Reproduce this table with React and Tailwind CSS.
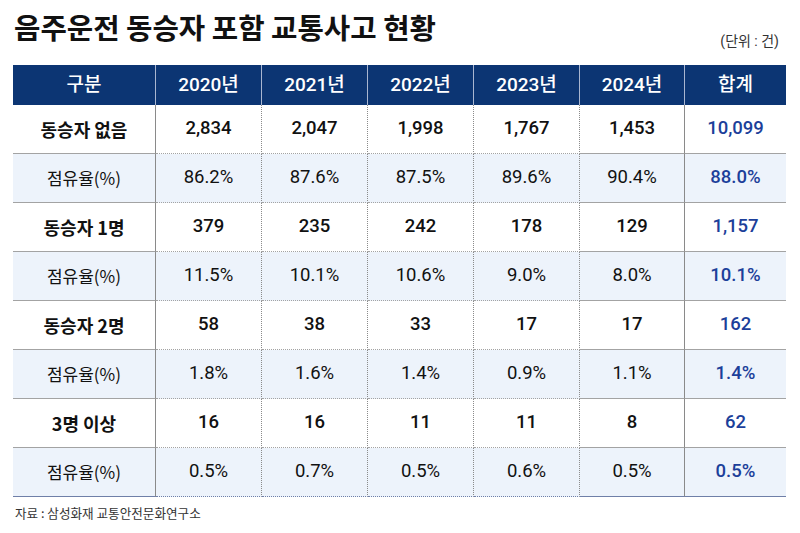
import React from "react";

const rows = [
  { label: "동승자 없음", bold: true, vals: ["2,834", "2,047", "1,998", "1,767", "1,453"], total: "10,099" },
  { label: "점유율(%)", bold: false, vals: ["86.2%", "87.6%", "87.5%", "89.6%", "90.4%"], total: "88.0%" },
  { label: "동승자 1명", bold: true, vals: ["379", "235", "242", "178", "129"], total: "1,157" },
  { label: "점유율(%)", bold: false, vals: ["11.5%", "10.1%", "10.6%", "9.0%", "8.0%"], total: "10.1%" },
  { label: "동승자 2명", bold: true, vals: ["58", "38", "33", "17", "17"], total: "162" },
  { label: "점유율(%)", bold: false, vals: ["1.8%", "1.6%", "1.4%", "0.9%", "1.1%"], total: "1.4%" },
  { label: "3명 이상", bold: true, vals: ["16", "16", "11", "11", "8"], total: "62" },
  { label: "점유율(%)", bold: false, vals: ["0.5%", "0.7%", "0.5%", "0.6%", "0.5%"], total: "0.5%" },
];

const headers = ["구분", "2020년", "2021년", "2022년", "2023년", "2024년", "합계"];

const FONT = { fontFamily: '"Roboto", "Noto Sans CJK KR", sans-serif' };
const KR = { fontFamily: '"Noto Sans CJK KR", sans-serif' };

export default function App() {
  return (
    <div className="w-[800px] h-[533px] bg-white px-[13px] pt-[9px] text-[#111]" style={FONT}>
      <div className="flex justify-between h-[56px]">
        <div className="self-start text-[28.7px] leading-[36px] font-bold text-[#111] pl-[1px]" style={KR}>
          음주운전 동승자 포함 교통사고 현황
        </div>
        <div className="self-end mb-[14px] mr-[8px] text-[14px] leading-[20px] text-[#333]">(단위 : 건)</div>
      </div>

      <div className="grid grid-cols-[143px_106px_106px_106px_106px_105px_101px]">
        {headers.map((h, i) => (
          <div
            key={h}
            className={`h-[40px] flex items-center justify-center bg-[#0c3573] text-white text-[19px] font-medium ${i < 6 ? "border-r border-[#a9b6d1]" : ""}`}
          >
            {h}
          </div>
        ))}

        {rows.map((r, ri) => {
          const bg = r.bold ? "bg-white" : "bg-[#edf3fb]";
          const last = ri === rows.length - 1;
          const bb = last ? "border-b border-b-[#6f7fa8]" : "border-b border-b-[#a3a3a3]";
          return (
            <React.Fragment key={ri}>
              <div
                className={`h-[49px] flex items-center justify-center ${bg} ${bb} border-r border-r-[#8a8a8a] ${r.bold ? "font-bold text-[18px]" : "font-normal text-[17px]"}`}
                style={KR}
              >
                {r.label}
              </div>
              {r.vals.map((v, vi) => (
                <div
                  key={vi}
                  className={`h-[49px] flex items-center justify-center ${bg} ${bb} border-r ${vi < 4 ? "border-dotted border-r-[#8a8a8a]" : "border-r-[#8a8a8a]"} text-[18.5px] ${r.bold ? "font-medium" : "font-normal"} text-[#111]`}
                >
                  {v}
                </div>
              ))}
              <div className={`h-[49px] flex items-center justify-center ${bg} ${bb} text-[18.5px] font-medium text-[#1c3f9a]`}>
                {r.total}
              </div>
            </React.Fragment>
          );
        })}
      </div>

      <div className="mt-[6px] pl-[2px] text-[12.6px] leading-[20px] text-[#333]" style={KR}>
        자료 : 삼성화재 교통안전문화연구소
      </div>
    </div>
  );
}
